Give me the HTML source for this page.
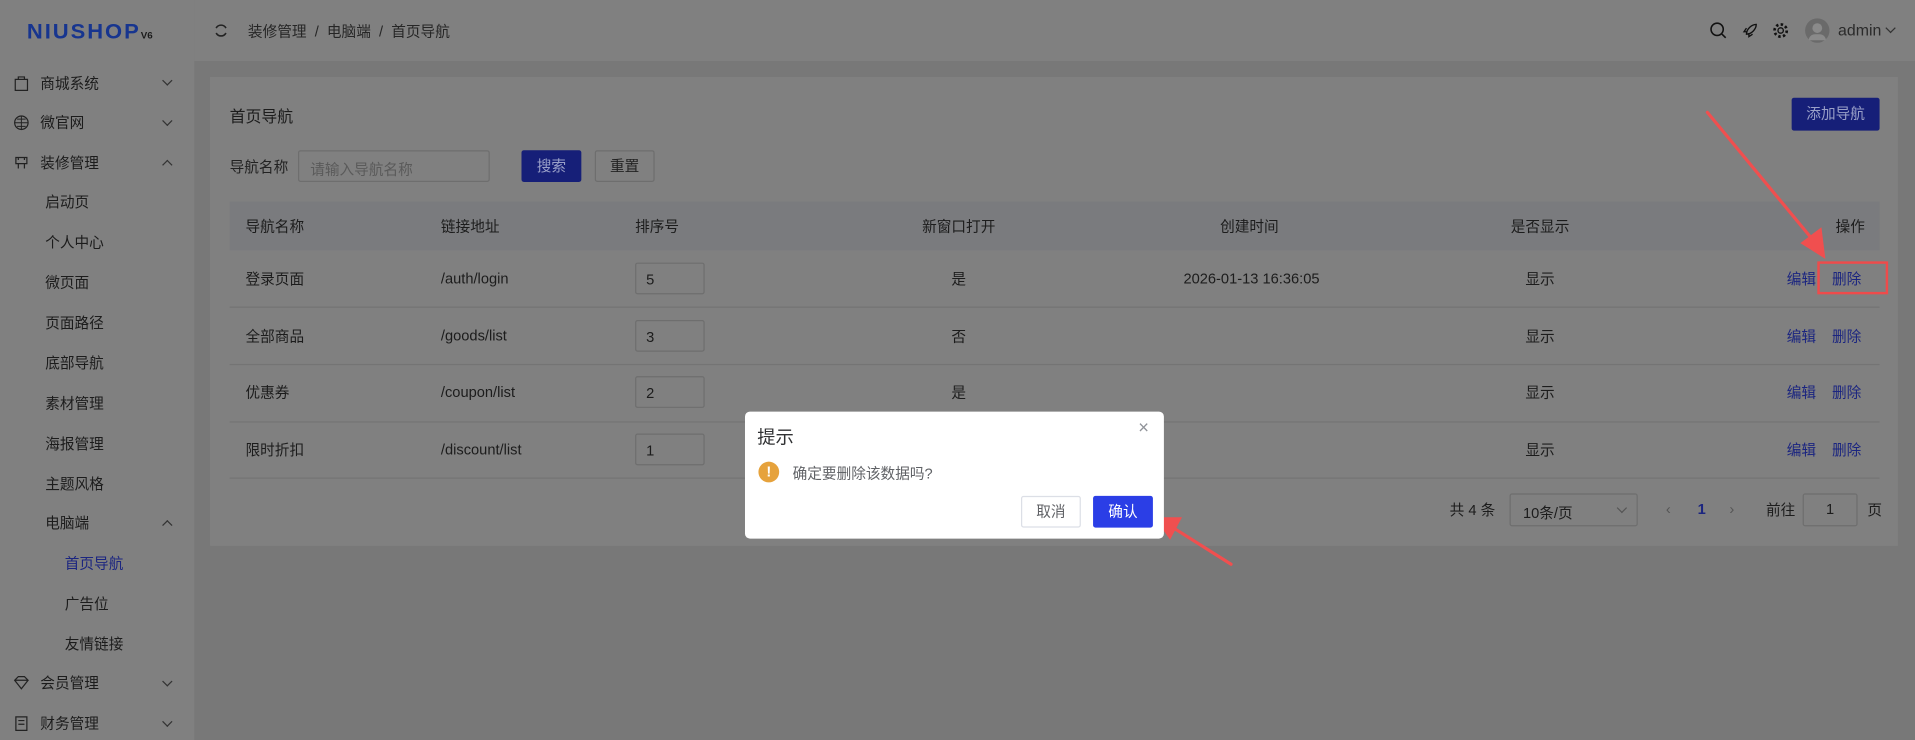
<!DOCTYPE html>
<html><head><meta charset="utf-8"><style>
*{margin:0;padding:0;box-sizing:border-box}
html,body{width:1915px;height:740px;overflow:hidden;background:#787878}
#w{position:absolute;left:0;top:0;width:1568px;height:606px;transform:scale(1.2213);transform-origin:0 0;font-family:"Liberation Sans","Noto Sans CJK SC",sans-serif;font-size:12px;color:#1c1c1c;background:#787878}
.a{position:absolute;white-space:nowrap}
.side{position:absolute;left:0;top:0;width:159px;height:606px;background:#808080}
.hdr{position:absolute;left:159px;top:0;right:0;height:50px;background:#808080}
.card{position:absolute;left:172px;top:63px;width:1382px;height:384px;background:#808080}
.si{position:absolute;font-size:12px;color:#1c1c1c;transform:translateY(-50%)}
.chev{position:absolute;width:6px;height:6px;border-right:1px solid #333;border-bottom:1px solid #333}
.btnp{position:absolute;background:#161f78;color:#9aa0c8;text-align:center;border-radius:2px}
.inp{position:absolute;border:1px solid #6e6e6e;background:#808080;border-radius:2px}
.cell{position:absolute;transform:translateY(-50%)}
.line{position:absolute;left:188px;width:1351px;height:1px;background:#747474}
.lk{color:#1b2580}
</style></head><body><div id="w">
<div class="side">
<div class="a" style="left:22px;top:16px;font-size:18px;font-weight:bold;color:#17358f;letter-spacing:1.6px;transform:scaleY(0.95)">NIUSHOP<span style="font-size:8px;color:#1b1b1b;letter-spacing:0">V6</span></div>
<svg class="a" style="left:11px;top:61px" width="13" height="14" viewBox="0 0 13 14"><rect x="1.5" y="4" width="10" height="9" fill="none" stroke="#222"/><path d="M4 4V2h5v2" fill="none" stroke="#222"/></svg>
<div class="si" style="left:33px;top:68px">商城系统</div><div class="chev" style="left:134px;top:63px;transform:rotate(45deg)"></div>
<svg class="a" style="left:11px;top:94px" width="13" height="13" viewBox="0 0 13 13"><circle cx="6.5" cy="6.5" r="5.5" fill="none" stroke="#222"/><path d="M1 6.5h11M6.5 1v11M3 3.5h7M3 9.5h7" fill="none" stroke="#222" stroke-width=".8"/></svg>
<div class="si" style="left:33px;top:100px">微官网</div><div class="chev" style="left:134px;top:96px;transform:rotate(45deg)"></div>
<svg class="a" style="left:11px;top:127px" width="13" height="13" viewBox="0 0 13 13"><path d="M2 2h9v5H2zM4 7v4M9 7v4M4 2v2M9 2v2" fill="none" stroke="#222"/></svg>
<div class="si" style="left:33px;top:133px">装修管理</div><div class="chev" style="left:134px;top:132px;transform:rotate(225deg)"></div>
<div class="si" style="left:37px;top:165px">启动页</div>
<div class="si" style="left:37px;top:198px">个人中心</div>
<div class="si" style="left:37px;top:231px">微页面</div>
<div class="si" style="left:37px;top:264px">页面路径</div>
<div class="si" style="left:37px;top:297px">底部导航</div>
<div class="si" style="left:37px;top:330px">素材管理</div>
<div class="si" style="left:37px;top:363px">海报管理</div>
<div class="si" style="left:37px;top:396px">主题风格</div>
<div class="si" style="left:37px;top:428px">电脑端</div><div class="chev" style="left:134px;top:427px;transform:rotate(225deg)"></div>
<div class="si" style="left:53px;top:461px;color:#1b2580">首页导航</div>
<div class="si" style="left:53px;top:494px">广告位</div>
<div class="si" style="left:53px;top:527px">友情链接</div>
<svg class="a" style="left:11px;top:553px" width="13" height="13" viewBox="0 0 13 13"><path d="M1 4l3-3h5l3 3-5.5 7z M1 4h11" fill="none" stroke="#222"/></svg>
<div class="si" style="left:33px;top:559px">会员管理</div><div class="chev" style="left:134px;top:555px;transform:rotate(45deg)"></div>
<svg class="a" style="left:11px;top:586px" width="13" height="13" viewBox="0 0 13 13"><path d="M2 1h9v11H2zM4 4h5M4 7h5" fill="none" stroke="#222"/></svg>
<div class="si" style="left:33px;top:592px">财务管理</div><div class="chev" style="left:134px;top:588px;transform:rotate(45deg)"></div>
</div>
<div class="hdr">
<svg class="a" style="left:16px;top:19px" width="12" height="12" viewBox="0 0 12 12"><path d="M10 4A4.5 4.5 0 0 0 2 4M2 8a4.5 4.5 0 0 0 8 0" fill="none" stroke="#222" stroke-width="1.3"/></svg>
<div class="a" style="left:44px;top:17px;color:#262626">装修管理 &nbsp;/&nbsp; 电脑端 &nbsp;/&nbsp; 首页导航</div>
<svg class="a" style="left:1241px;top:18px" width="14" height="14" viewBox="0 0 14 14"><circle cx="6" cy="6" r="5" fill="none" stroke="#111" stroke-width="1.3"/><path d="M10 10l3 3" stroke="#111" stroke-width="1.3"/></svg>
<svg class="a" style="left:1267px;top:18px" width="14" height="14" viewBox="0 0 14 14"><path d="M4 10C4 6 8 2 12 2 12 6 8 10 4 10zM5 8l-3 0 2-3M6 9v3l3-2" fill="none" stroke="#111" stroke-width="1.1"/></svg>
<svg class="a" style="left:1292px;top:18px" width="14" height="14" viewBox="0 0 14 14"><circle cx="7" cy="7" r="2.2" fill="none" stroke="#111" stroke-width="1.1"/><circle cx="7" cy="7" r="5" fill="none" stroke="#111" stroke-width="2.2" stroke-dasharray="2 1.9"/></svg>
<div class="a" style="left:1319px;top:15px;width:20px;height:20px;border-radius:50%;background:#6a6a6a"><div class="a" style="left:6px;top:4px;width:8px;height:8px;border-radius:50%;background:#8a8a8a"></div><div class="a" style="left:3px;top:13px;width:14px;height:5px;border-radius:5px 5px 0 0;background:#8a8a8a"></div></div>
<div class="a" style="left:1346px;top:17px;font-size:13px;color:#2a2a2a">admin</div>
<div class="chev" style="left:1386px;top:20px;transform:rotate(45deg)"></div>
</div>
<div class="card"></div>
<div class="a" style="left:188px;top:85px;font-size:13px">首页导航</div>
<div class="btnp" style="left:1467px;top:80px;width:72px;height:27px;line-height:27px">添加导航</div>
<div class="a" style="left:188px;top:128px;color:#222">导航名称</div>
<div class="inp" style="left:244px;top:123px;width:157px;height:26px"><span class="a" style="left:9px;top:6px;color:#5a5a5a">请输入导航名称</span></div>
<div class="btnp" style="left:427px;top:123px;width:49px;height:26px;line-height:26px">搜索</div>
<div class="inp" style="left:487px;top:123px;width:49px;height:26px;text-align:center;line-height:24px;color:#222">重置</div>
<div class="a" style="left:188px;top:165px;width:1351px;height:40px;background:#7a7b7e"></div>
<div class="cell" style="left:201px;top:185px">导航名称</div>
<div class="cell" style="left:361px;top:185px">链接地址</div>
<div class="cell" style="left:520px;top:185px">排序号</div>
<div class="cell" style="left:755px;top:185px">新窗口打开</div>
<div class="cell" style="left:999px;top:185px">创建时间</div>
<div class="cell" style="left:1237px;top:185px">是否显示</div>
<div class="cell" style="left:1503px;top:185px">操作</div>
<div class="line" style="top:251px"></div><div class="line" style="top:298px"></div><div class="line" style="top:345px"></div><div class="line" style="top:391px"></div>
<div class="cell" style="left:201px;top:228px">登录页面</div><div class="cell" style="left:361px;top:228px">/auth/login</div>
<div class="inp" style="left:520px;top:215px;width:57px;height:26px"><span class="a" style="left:8px;top:6px">5</span></div>
<div class="cell" style="left:779px;top:228px">是</div><div class="cell" style="left:969px;top:228px">2026-01-13 16:36:05</div><div class="cell" style="left:1249px;top:228px">显示</div>
<div class="cell lk" style="left:1463px;top:228px">编辑</div><div class="cell lk" style="left:1500px;top:228px">删除</div>
<div class="cell" style="left:201px;top:275px">全部商品</div><div class="cell" style="left:361px;top:275px">/goods/list</div>
<div class="inp" style="left:520px;top:262px;width:57px;height:26px"><span class="a" style="left:8px;top:6px">3</span></div>
<div class="cell" style="left:779px;top:275px">否</div><div class="cell" style="left:1249px;top:275px">显示</div>
<div class="cell lk" style="left:1463px;top:275px">编辑</div><div class="cell lk" style="left:1500px;top:275px">删除</div>
<div class="cell" style="left:201px;top:321px">优惠券</div><div class="cell" style="left:361px;top:321px">/coupon/list</div>
<div class="inp" style="left:520px;top:308px;width:57px;height:26px"><span class="a" style="left:8px;top:6px">2</span></div>
<div class="cell" style="left:779px;top:321px">是</div><div class="cell" style="left:1249px;top:321px">显示</div>
<div class="cell lk" style="left:1463px;top:321px">编辑</div><div class="cell lk" style="left:1500px;top:321px">删除</div>
<div class="cell" style="left:201px;top:368px">限时折扣</div><div class="cell" style="left:361px;top:368px">/discount/list</div>
<div class="inp" style="left:520px;top:355px;width:57px;height:26px"><span class="a" style="left:8px;top:6px">1</span></div>
<div class="cell" style="left:1249px;top:368px">显示</div>
<div class="cell lk" style="left:1463px;top:368px">编辑</div><div class="cell lk" style="left:1500px;top:368px">删除</div>
<div class="cell" style="left:1187px;top:417px">共 4 条</div>
<div class="inp" style="left:1236px;top:404px;width:105px;height:27px"><span class="a" style="left:10px;top:6px">10条/页</span><div class="chev" style="left:88px;top:8px;transform:rotate(45deg);border-color:#555"></div></div>
<div class="cell" style="left:1364px;top:417px;color:#555">‹</div>
<div class="cell lk" style="left:1390px;top:417px;font-weight:bold">1</div>
<div class="cell" style="left:1416px;top:417px;color:#555">›</div>
<div class="cell" style="left:1446px;top:417px">前往</div>
<div class="inp" style="left:1476px;top:404px;width:45px;height:27px;text-align:center;line-height:25px">1</div>
<div class="cell" style="left:1529px;top:417px">页</div>
<div class="a" style="left:1488px;top:214px;width:58px;height:27px;border:2px solid #ef4b4b"></div>
<svg class="a" style="left:0;top:0" width="1568" height="606"><g stroke="#f04f4f" fill="#f04f4f" stroke-linecap="round"><line x1="1398" y1="92" x2="1484" y2="196" stroke-width="2.6"/><polygon points="1494,211 1475,199 1491,187"/><line x1="1008" y1="462" x2="962" y2="433" stroke-width="2.6"/><polygon points="946,424 967,424 958,441"/></g></svg>
<div class="a" style="left:610px;top:337px;width:343px;height:104px;background:#fff;border-radius:4px"></div>
<div class="a" style="left:620px;top:347px;font-size:15px;color:#303133">提示</div>
<div class="a" style="left:932px;top:342px;font-size:15px;color:#909399">×</div>
<div class="a" style="left:621px;top:378px;width:17px;height:17px;border-radius:50%;background:#e6a23c;color:#fff;font-weight:bold;text-align:center;line-height:17px;font-size:12px">!</div>
<div class="a" style="left:649px;top:379px;color:#606266">确定要删除该数据吗?</div>
<div class="a" style="left:836px;top:406px;width:49px;height:26px;border:1px solid #dcdfe6;border-radius:2px;text-align:center;line-height:24px;color:#606266">取消</div>
<div class="a" style="left:895px;top:406px;width:49px;height:26px;background:#2b3ee6;border-radius:2px;text-align:center;line-height:26px;color:#fff">确认</div>
</div></body></html>
